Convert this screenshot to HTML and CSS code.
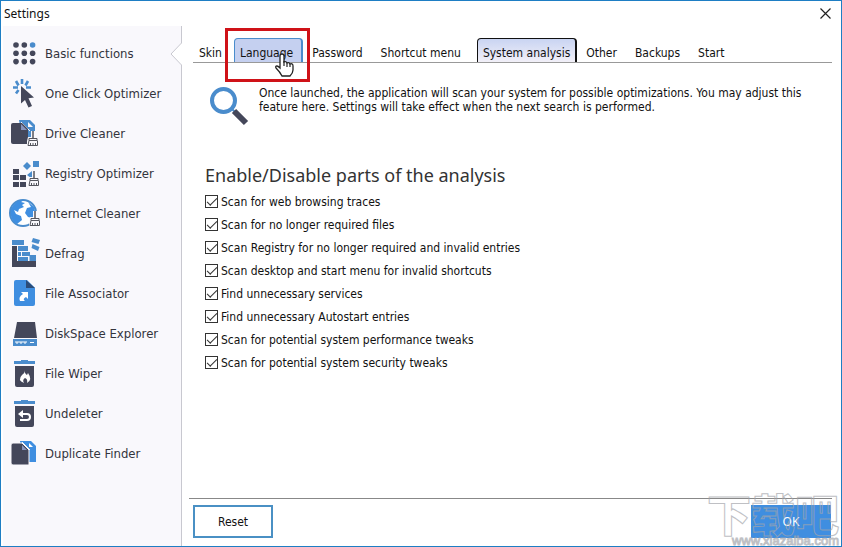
FILE: index.html
```html
<!DOCTYPE html>
<html lang="en">

<head>
    <meta charset="UTF-8">
    <meta name="viewport" content="width=device-width, initial-scale=1.0">
    <title>Settings</title>
    <link rel="stylesheet" href="styles.css">
</head>

<body>
    <!-- small broom shared by the cleaner icons -->
    <svg class="defs" width="0" height="0" aria-hidden="true">
        <symbol id="broom" viewBox="0 0 11 16">
            <path d="M4 0h4v6h3v10H0v-6l1-4h3z" fill="#f9f8fc" />
            <path d="M6 0v7" stroke="#55565e" stroke-width="1.500" />
            <path d="M2 7.500h8v2H2zM2 9.500L1 14.500h9.500V9.500M3.500 12v3M6 12v3M8.500 12v3" fill="none" stroke="#55565e" />
        </symbol>
    </svg>

    <div class="window">
        <header class="titlebar">
            <h1>Settings</h1>
            <button class="close" type="button" aria-label="Close">
                <svg width="11" height="11" viewBox="0 0 11 11"><path d="M.5 .5l10 10M10.500 .5l-10 10" stroke="#222" stroke-width="1.200" /></svg>
            </button>
        </header>

        <div class="main">
            <nav class="sidebar">
                <a class="active" href="#basic">
                    <svg class="icon" viewBox="0 0 32 32">
                        <g fill="#44475a">
                            <circle cx="8" cy="8" r="2.800" /><circle cx="16.300" cy="8" r="2.800" />
                            <circle cx="8" cy="16.300" r="2.800" /><circle cx="16.300" cy="16.300" r="2.800" /><circle cx="24.600" cy="16.300" r="2.800" />
                            <circle cx="8" cy="24.600" r="2.800" /><circle cx="16.300" cy="24.600" r="2.800" /><circle cx="24.600" cy="24.600" r="2.800" />
                        </g>
                        <circle cx="24.600" cy="8" r="2.800" fill="#4a8ccc" />
                    </svg>
                    Basic functions
                </a>
                <a href="#optimizer">
                    <svg class="icon" viewBox="0 0 32 32">
                        <path d="M14 2v5M8 4l2.500 4.500M20 4l-2.500 4.500M5 10.500h5M18 10.500h5M8 16.500l2.500-3.500" stroke="#4a8ccc" stroke-width="2.600" />
                        <path d="M13 9l13 11.500-5.500.8 3.500 7.700-3.500 1.500-3.500-7.500-4 3.500z" fill="#44475a" />
                    </svg>
                    One Click Optimizer
                </a>
                <a href="#drive">
                    <svg class="icon" viewBox="0 0 32 32">
                        <path d="M11 3h11l5 5v14H14z" fill="#4a8ccc" />
                        <path d="M13 5l9 9" stroke="#f9f8fc" />
                        <path d="M20 5v5h5z" fill="#f9f8fc" />
                        <path d="M5 6h9l6 6v15H5q-2 0-2-2V8q0-2 2-2z" fill="#44475a" />
                        <path d="M13 7v6h6z" fill="#8794bd" />
                        <use href="#broom" x="19" y="14" width="11" height="16" />
                    </svg>
                    Drive Cleaner
                </a>
                <a href="#registry">
                    <svg class="icon" viewBox="0 0 32 32">
                        <path d="M5 12h6v5H5zM5 18h6v5H5zM12 18h6v5h-6zM5 25h6v5H5zM12 25h6v5h-6z" fill="#44475a" />
                        <path d="M19 5l4 4-4 4-4-4zM25 4h6v6h-6zM19 18l5-4v8z" fill="#4a8ccc" />
                        <use href="#broom" x="20" y="14" width="11" height="16" />
                    </svg>
                    Registry Optimizer
                </a>
                <a href="#internet">
                    <svg class="icon" viewBox="0 0 32 32">
                        <circle cx="15" cy="16" r="13" fill="#fff" stroke="#4a8ccc" stroke-width="2" />
                        <path d="M3 12Q7 3 16 3l-3 2 4 1-3 2 2 2-5 2-1 3-4-2 2 4 5 2 1 4-5 4Q1 23 3 12zM20 5l6 5 2 8-4 3-4-1-3-4 2-5 4-1z" fill="#3f8ee0" />
                        <use href="#broom" x="21" y="14" width="11" height="16" />
                    </svg>
                    Internet Cleaner
                </a>
                <a href="#defrag">
                    <svg class="icon" viewBox="0 0 32 32">
                        <path d="M4 9h5v15h19v6H4z" fill="#44475a" />
                        <path d="M4 3h12v5H4zM10 9h10v5H10zM10 15h3v4h-3zM14 15h8v4h-8zM10 20h10v4H10zM21.500 18h6.500v6h-6.500zM25 1l7 2-1.500 4-7-2zM24.500 7l7 3-1.500 4-6.500-3z" fill="#4a8ccc" />
                    </svg>
                    Defrag
                </a>
                <a href="#associator">
                    <svg class="icon" viewBox="0 0 32 32">
                        <path d="M8 3h11l8 8v16q0 2-2 2H8q-2 0-2-2V5q0-2 2-2z" fill="#3f8ee0" />
                        <path d="M18 3v8h9z" fill="#2c4c78" />
                        <path d="M13 15h7v7l-2-2q-4 2-1 4h-5q-2-4 3-7z" fill="#fff" />
                    </svg>
                    File Associator
                </a>
                <a href="#diskspace">
                    <svg class="icon" viewBox="0 0 32 32">
                        <path d="M9 5h18l2 16H6z" fill="#44475a" />
                        <path d="M5 22h24v7H5z" fill="#4a8ccc" />
                        <path d="M8 24v2h2v-2M12 24v2h2v-2M16 24v2h2v-2M22 25.500h4" fill="none" stroke="#fff" />
                    </svg>
                    DiskSpace Explorer
                </a>
                <a href="#wiper">
                    <svg class="icon" viewBox="0 0 32 32">
                        <path d="M6 4h7V3h7v1h7v3H6z" fill="#4a8ccc" />
                        <path d="M7 9h19v19q0 2-2 2H9q-2 0-2-2z" fill="#44475a" />
                        <path d="M17 13q-1 3 2 5l1-2q5 7-1 10 1-4-2-5-3 2-1 5-7-3-2-8 3-2 3-5z" fill="#fff" />
                    </svg>
                    File Wiper
                </a>
                <a href="#undeleter">
                    <svg class="icon" viewBox="0 0 32 32">
                        <path d="M6 4h7V3h7v1h7v3H6z" fill="#4a8ccc" />
                        <path d="M7 9h19v19q0 2-2 2H9q-2 0-2-2z" fill="#44475a" />
                        <path d="M13 17h6q3 0 3 3t-3 3h-7" fill="none" stroke="#fff" stroke-width="2" />
                        <path d="M15 13v8l-5-4z" fill="#fff" />
                    </svg>
                    Undeleter
                </a>
                <a href="#duplicate">
                    <svg class="icon" viewBox="0 0 32 32">
                        <path d="M12 4h11l5 5v16H15z" fill="#3f8ee0" />
                        <path d="M14 5l8 8" stroke="#f9f8fc" />
                        <path d="M21 6v4h4z" fill="#fff" />
                        <path d="M5 6h9l7 7v15H5q-2 0-2-2V8q0-2 2-2z" fill="#44475a" stroke="#f9f8fc" />
                        <path d="M14 8v5h5z" fill="#8794bd" />
                    </svg>
                    Duplicate Finder
                </a>
                <svg class="notch" width="12" height="24" viewBox="0 0 12 24">
                    <path d="M11.500 0v1L1 12l10.500 11v1H12V0z" fill="#fff" />
                    <path d="M11.500 0v1L1 12l10.500 11v1" fill="none" stroke="#c8c8d0" />
                </svg>
            </nav>

            <main class="panel">
                <div class="tabs" role="tablist">
                    <button type="button" role="tab">Skin</button>
                    <button class="hovered" type="button" role="tab">Language
                        <span class="highlight"></span>
                        <svg class="cursor" width="20" height="24" viewBox="0 0 20 24">
                            <path d="M6 14V3q0-2 2-2t2 2v6q2-1 3 1 2-1 3 1 3-1 3 2v4q0 3-3 6H8q-2-4-6-8-1-2 1-2 1 0 3 2z" fill="#fff" stroke="#222" stroke-width="1.300" />
                            <path d="M10 8v5M13 10v4M16 11v3" stroke="#222" stroke-width="1.200" />
                        </svg>
                    </button>
                    <button type="button" role="tab">Password</button>
                    <button type="button" role="tab">Shortcut menu</button>
                    <button class="selected" type="button" role="tab" aria-selected="true">System analysis</button>
                    <button type="button" role="tab">Other</button>
                    <button type="button" role="tab">Backups</button>
                    <button type="button" role="tab">Start</button>
                </div>

                <div class="intro">
                    <svg width="40" height="40" viewBox="0 0 40 40">
                        <circle cx="14.500" cy="14.500" r="11.500" fill="none" stroke="#4a8ccc" stroke-width="4" />
                        <path d="M23 23l3 3" stroke="#4a8ccc" stroke-width="2" />
                        <path d="M25 25l12 12" stroke="#44475a" stroke-width="6" />
                    </svg>
                    <p>Once launched, the application will scan your system for possible optimizations. You may adjust this feature here. Settings will take effect when the next search is performed.</p>
                </div>

                <form class="options" id="options">
                    <h2>Enable/Disable parts of the analysis</h2>
                    <label><input type="checkbox" checked>Scan for web browsing traces</label>
                    <label><input type="checkbox" checked>Scan for no longer required files</label>
                    <label><input type="checkbox" checked>Scan Registry for no longer required and invalid entries</label>
                    <label><input type="checkbox" checked>Scan desktop and start menu for invalid shortcuts</label>
                    <label><input type="checkbox" checked>Find unnecessary services</label>
                    <label><input type="checkbox" checked>Find unnecessary Autostart entries</label>
                    <label><input type="checkbox" checked>Scan for potential system performance tweaks</label>
                    <label><input type="checkbox" checked>Scan for potential system security tweaks</label>
                </form>

                <footer class="buttons">
                    <button class="reset" type="reset" form="options">Reset</button>
                    <button class="ok" type="submit" form="options">OK</button>
                </footer>
            </main>
        </div>

        <div class="watermark">
            <span class="name" lang="zh">下载吧</span>
            <span class="site">www.xiazaiba.com</span>
        </div>
    </div>
</body>

</html>
```

FILE: styles.css
```css
* {
    box-sizing: border-box;
}

body {
    margin: 0;
    font-family: "DejaVu Sans Condensed", "Noto Sans", sans-serif;
    font-size: 12px;
    color: #111;
    background-color: #fff;
}

button {
    font: inherit;
    color: inherit;
    background: none;
    border: none;
    padding: 0;
}

.defs {
    position: absolute;
}

.window {
    position: relative;
    display: flex;
    flex-direction: column;
    min-height: 100vh;
    border: 1px solid #1e7ec4;
}

.titlebar {
    display: flex;
    align-items: center;
    justify-content: space-between;
    height: 25px;
    padding: 0 10px 0 3px;
}

.titlebar h1 {
    margin: 0;
    font-family: "Noto Sans", sans-serif;
    font-size: 12px;
    font-weight: normal;
}

.close {
    display: flex;
}

.main {
    flex: 1;
    display: flex;
    padding-left: 2px;
}

/* left menu */
.sidebar {
    position: relative;
    flex: none;
    width: 179px;
    padding-top: 7px;
    background-color: #f9f8fc;
    border-right: 1px solid #c8c8d0;
}

.sidebar a {
    display: flex;
    align-items: center;
    gap: 5px;
    height: 40px;
    padding-left: 5px;
    color: #33343c;
    font-size: 13px;
    text-decoration: none;
    white-space: nowrap;
}

.icon {
    flex: none;
    width: 32px;
    height: 32px;
}

.notch {
    position: absolute;
    top: 16px;
    right: -1px;
}

/* right side */
.panel {
    flex: 1;
    display: flex;
    flex-direction: column;
    padding: 12px 9px 8px 7px;
}

.tabs {
    display: flex;
    gap: 3px;
    height: 25px;
    margin-left: 4px;
    border-bottom: 1px solid #999;
}

.tabs button {
    position: relative;
    padding: 4px 8px 0 5px;
    border: 1px solid transparent;
    border-bottom: none;
    border-radius: 4px 4px 0 0;
    white-space: nowrap;
}

.tabs .hovered {
    background-color: #c5d0f0;
    border-color: #4a8ccc;
    border-right-width: 2px;
}

.tabs .selected {
    margin-left: 4px;
    padding-right: 5px;
    background: linear-gradient(#c9d4f2, #f2f0f8);
    border-color: #111;
    border-right-width: 2px;
}

.highlight {
    position: absolute;
    top: -11px;
    left: -10px;
    width: 85px;
    height: 54px;
    border: 3px solid #cf1218;
}

.cursor {
    position: absolute;
    top: 14px;
    left: 39px;
}

.intro {
    display: flex;
    align-items: flex-start;
    gap: 10px;
    padding: 23px 18px 0 20px;
}

.intro svg {
    flex: none;
}

.intro p {
    margin: 0;
    line-height: 14px;
}

.options {
    flex: 1;
    display: flex;
    flex-direction: column;
    align-items: flex-start;
    padding: 36px 0 0 16px;
}

.options h2 {
    margin: 0 0 2px;
    color: #333;
    font-family: "Noto Sans", sans-serif;
    font-size: 18px;
    font-weight: normal;
    line-height: 26px;
}

.options label {
    display: flex;
    align-items: center;
    gap: 3px;
    height: 23px;
}

.options input {
    appearance: none;
    display: grid;
    place-items: center;
    width: 13px;
    height: 13px;
    margin: 0;
    border: 1px solid #333;
}

.options input:checked::before {
    content: "";
    width: 9px;
    height: 4px;
    margin-bottom: 3px;
    border: solid #333;
    border-width: 0 0 1px 1px;
    transform: rotate(-45deg);
}

.buttons {
    display: flex;
    justify-content: space-between;
    padding: 6px 1px 0 4px;
    border-top: 1px solid #888;
}

.reset,
.ok {
    width: 80px;
    height: 33px;
}

.reset {
    border: 2px solid #4a90c4;
}

.ok {
    background-color: #3f8ee0;
    color: #fff;
    font-family: "Noto Sans", sans-serif;
}

/* site mark over the lower right corner */
.watermark {
    position: absolute;
    right: 2px;
    bottom: 0;
    display: flex;
    flex-direction: column;
    align-items: flex-end;
    color: transparent;
    opacity: 0.7;
    pointer-events: none;
}

.name {
    font-family: "Noto Sans CJK SC", sans-serif;
    font-size: 44px;
    font-weight: 900;
    line-height: 46px;
    -webkit-text-stroke: 1px #a4a6ac;
}

.site {
    font-family: "Liberation Sans", sans-serif;
    font-size: 13px;
    line-height: 10px;
    -webkit-text-stroke: 1px #a4a6ac;
}
```
